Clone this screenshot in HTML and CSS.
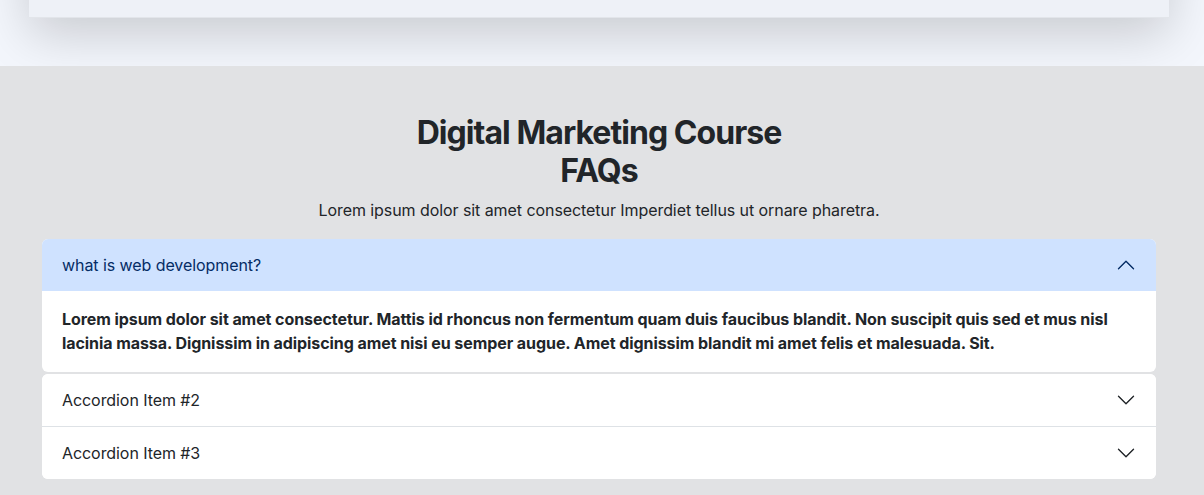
FILE: index.html
```html
<!DOCTYPE html>
<html lang="en">
<head>
<meta charset="utf-8">
<title>Digital Marketing Course FAQs</title>
<link rel="stylesheet" href="styles.css">
</head>
<body>
  <section class="top">
    <div class="top-card"></div>
  </section>
  <section class="faq">
    <div class="container">
      <h2 class="faq-title">Digital Marketing Course FAQs</h2>
      <p class="faq-sub">Lorem ipsum dolor sit amet consectetur Imperdiet tellus ut ornare pharetra.</p>
      <div class="accordion">
        <div class="acc-item acc-single">
          <button class="acc-btn active">
            <span>what is web development?</span>
            <svg class="chev" viewBox="0 0 16 16" width="20" height="20"><path d="M2 11L8 5L14 11" fill="none" stroke="currentColor" stroke-linecap="round" stroke-linejoin="round" stroke-width="1.1"/></svg>
          </button>
          <div class="acc-body">Lorem ipsum dolor sit amet consectetur. Mattis id rhoncus non fermentum quam duis faucibus blandit. Non suscipit quis sed et mus nisl lacinia massa. Dignissim in adipiscing amet nisi eu semper augue. Amet dignissim blandit mi amet felis et malesuada. Sit.</div>
        </div>
        <div class="acc-group">
          <div class="acc-item">
            <button class="acc-btn">
              <span>Accordion Item #2</span>
              <svg class="chev" viewBox="0 0 16 16" width="20" height="20"><path d="M2 5L8 11L14 5" fill="none" stroke="currentColor" stroke-linecap="round" stroke-linejoin="round" stroke-width="1.1"/></svg>
            </button>
          </div>
          <div class="acc-item">
            <button class="acc-btn">
              <span>Accordion Item #3</span>
              <svg class="chev" viewBox="0 0 16 16" width="20" height="20"><path d="M2 5L8 11L14 5" fill="none" stroke="currentColor" stroke-linecap="round" stroke-linejoin="round" stroke-width="1.1"/></svg>
            </button>
          </div>
        </div>
      </div>
    </div>
  </section>
</body>
</html>
```

FILE: styles.css
```css
* { box-sizing: border-box; }
html, body { margin: 0; padding: 0; }
body {
  font-family: Inter, "Noto Sans", sans-serif;
  color: #212529;
  font-size: 16px;
  line-height: 1.5;
  letter-spacing: -0.07px;
  background: #e1e2e4;
  overflow: hidden;
}
.top {
  background: #f3f6fc;
  padding: 0 0 48px;
  overflow: hidden;
}
.top-card {
  height: 318px;
  margin-top: -300px;
  width: 1140px;
  margin-left: 29px;
  background: #eef1f7;
  border-bottom: 1px solid #e2e5ea;
  box-shadow: 0 16px 48px rgba(0, 0, 0, 0.175);
}
.faq {
  background: #e1e2e4;
  padding: 48px 0 16px;
}
.container {
  width: 1140px;
  margin-left: 29px;
  padding: 0 13px;
}
.faq-title {
  margin: 0 auto;
  width: 420px;
  text-align: center;
  font-size: 32px;
  line-height: 38px;
  font-weight: 700;
  letter-spacing: -0.95px;
  color: #212529;
}
.faq-sub {
  margin: 8px 0 17px;
  text-align: center;
  font-size: 16px;
  line-height: 24px;
}
.accordion { display: flex; flex-direction: column; gap: 2px; }
.acc-single, .acc-group {
  background: #fff;
  border-radius: 6px;
  overflow: hidden;
}
.acc-item + .acc-item { border-top: 1px solid #dee2e6; }
.acc-btn {
  display: flex;
  align-items: center;
  justify-content: space-between;
  width: 100%;
  height: 52px;
  padding: 0 20px;
  border: 0;
  background: #fff;
  font-family: inherit;
  font-size: 16px;
  letter-spacing: inherit;
  color: #212529;
  text-align: left;
  cursor: pointer;
}
.acc-btn.active {
  background: #cfe2ff;
  color: #052c65;
}
.chev { flex: none; display: block; }
.acc-body {
  padding: 16px 20px 17px;
  font-weight: 700;
  line-height: 24px;
  color: #212529;
}
```
